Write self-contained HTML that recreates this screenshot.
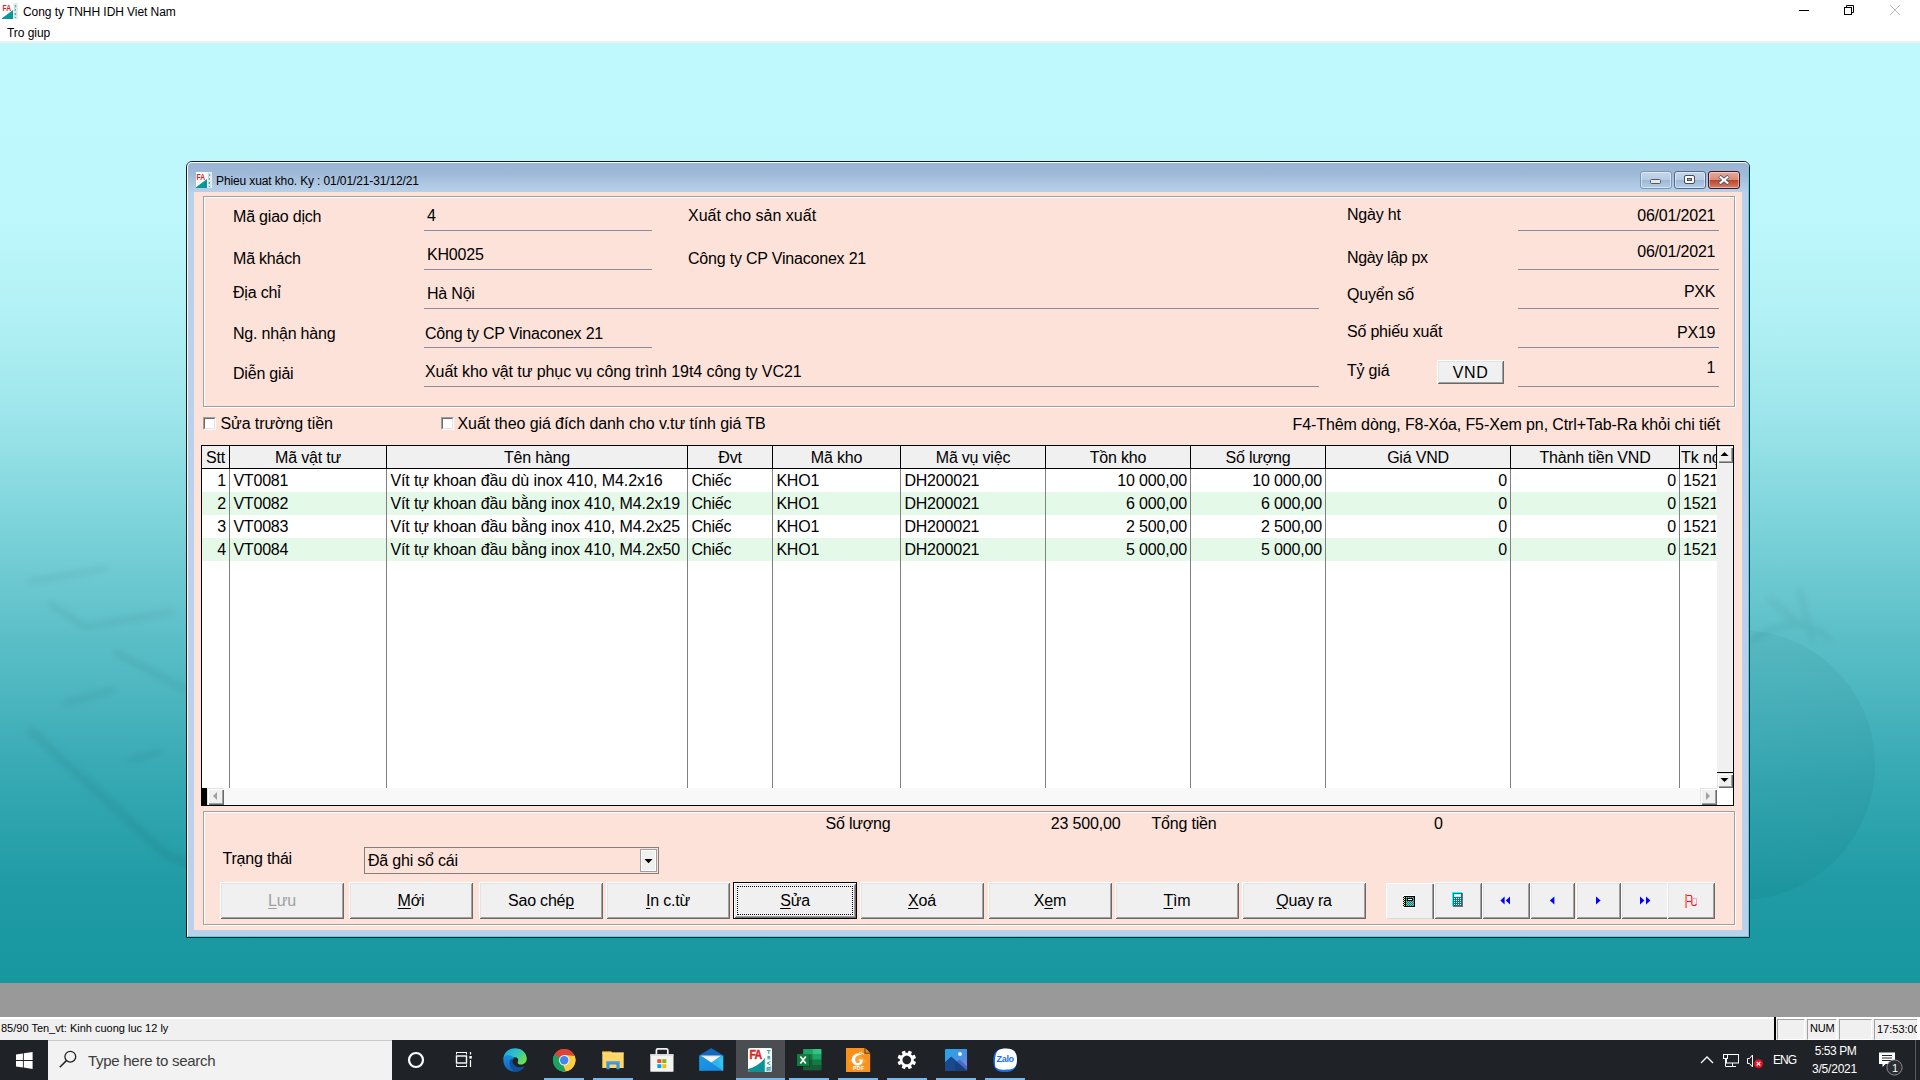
<!DOCTYPE html>
<html><head><meta charset="utf-8"><title>Phieu xuat kho</title>
<style>
html,body{margin:0;padding:0;}
body{width:1920px;height:1080px;overflow:hidden;position:relative;background:#fff;font-family:"Liberation Sans",sans-serif;}
.t{position:absolute;white-space:pre;font-family:"Liberation Sans",sans-serif;}
.r{position:absolute;}
svg{position:absolute;overflow:visible;}
u{text-decoration:underline;text-underline-offset:2px;text-decoration-thickness:1px;}
</style></head><body>

<div class="r" style="left:0px;top:0px;width:1920px;height:42px;background:#fff;"></div>
<div class="r" style="left:0px;top:41px;width:1920px;height:2px;background:#f0f0f0;"></div>
<svg style="left:2px;top:3px" width="16" height="16" viewBox="0 0 16 16"><rect width="16" height="16" fill="#fff"/><rect x="11.5" width="4.5" height="16" fill="#e4ecec"/><path d="M0 15.2L11 7V16H0Z" fill="#0c959b"/><path d="M12.6 2.2l1.6 1-1.6 1M12.6 6l1.4.8-1.4.8M14.2 10l-1.6 1 1.6 1M12.6 14l1.6 1" stroke="#2f8f8f" stroke-width=".8" fill="none"/><text x="0.5" y="8" font-family="Liberation Sans" font-weight="700" font-size="8.4" fill="#e02020" textLength="8.6" lengthAdjust="spacingAndGlyphs">FA</text></svg>
<div class="t" style="top:4px;font-size:12px;line-height:16px;color:#000;letter-spacing:-0.06px;left:23px;">Cong ty TNHH IDH Viet Nam</div>
<div class="t" style="top:25px;font-size:12px;line-height:16px;color:#000;letter-spacing:-0.05px;left:7px;">Tro giup</div>
<div class="r" style="left:1799px;top:10px;width:10px;height:1px;background:#000;"></div>
<svg style="left:1844px;top:5px" width="10" height="10" viewBox="0 0 10 10"><path d="M2.5 2.5V0.5H9.5V7.5H7.5" fill="none" stroke="#000" stroke-width="1"/><rect x="0.5" y="2.5" width="7" height="7" fill="none" stroke="#000" stroke-width="1"/></svg>
<svg style="left:1890px;top:5px" width="10" height="10" viewBox="0 0 10 10"><path d="M0 0L10 10M10 0L0 10" fill="none" stroke="#bcbcbc" stroke-width="1"/></svg>
<div class="r" style="left:0px;top:43px;width:1920px;height:940px;background:linear-gradient(to bottom,#c0f9fd 0%,#bef8fc 18%,#b0f0f4 30%,#9ce5ea 40%,#88dae0 47%,#5cbfc8 63%,#36a9b3 78%,#1f9ba5 90%,#17979f 100%);"></div>
<div class="r" style="left:1605px;top:630px;width:270px;height:270px;border-radius:50%;background:radial-gradient(circle at 40% 45%,rgba(0,60,70,0.03) 0%,rgba(0,60,70,0.06) 70%,rgba(0,50,60,0.09) 100%);"></div>
<svg style="left:0;top:42px" width="1920" height="941" viewBox="0 42 1920 941"><defs><filter id="bl" x="-20%" y="-20%" width="140%" height="140%"><feGaussianBlur stdDeviation="3"/></filter></defs><g filter="url(#bl)" stroke="rgba(0,45,55,0.06)" stroke-width="6" fill="none" stroke-linecap="round"><path d="M31 581L105 569"/><path d="M50 604L86 627L171 612"/><path d="M66 703L113 690"/><path d="M117 653L167 680L186 690"/><path d="M31 731L167 855L186 862" stroke-width="9"/><path d="M130 760L160 752"/><path d="M1752 640Q1800 610 1830 640M1770 600L1800 625M1800 590L1812 640" stroke-width="5"/></g></svg>
<div class="r" style="left:0px;top:983px;width:1920px;height:34px;background:#999999;"></div>
<div class="r" style="left:0px;top:1017px;width:1920px;height:23px;background:#f0f0f0;"></div>
<div class="r" style="left:0px;top:1017px;width:1920px;height:2px;background:#fff;"></div>
<div class="t" style="top:1021px;font-size:11px;line-height:15px;color:#000;letter-spacing:0px;left:1px;">85/90 Ten_vt: Kinh cuong luc 12 ly</div>
<div class="r" style="left:186px;top:161px;width:1562px;height:775px;border:1px solid #1a1a1a;border-radius:6px 6px 0 0;background:#b9d1ea;overflow:hidden;"><div class="r" style="left:0;top:0;width:1562px;height:31px;background:linear-gradient(to bottom,#98b4d3 0%,#9fbad8 40%,#b4cde7 85%,#b9d1ea 100%);"></div><div class="r" style="left:0;top:0;width:1562px;height:775px;border-top:1px solid #fff;border-left:1px solid #fff;border-radius:5px 5px 0 0;box-sizing:border-box;"></div><div class="r" style="left:1561px;top:8px;width:1px;height:767px;background:#35dcf5;"></div><div class="r" style="left:1px;top:774px;width:1561px;height:1px;background:#35dcf5;"></div></div>
<div class="r" style="left:194px;top:192px;width:1548px;height:738px;background:#fce2d9;"></div>
<svg style="left:196px;top:172px" width="16" height="16" viewBox="0 0 16 16"><rect width="16" height="16" fill="#fff"/><rect x="11.5" width="4.5" height="16" fill="#e4ecec"/><path d="M0 15.2L11 7V16H0Z" fill="#0c959b"/><path d="M12.6 2.2l1.6 1-1.6 1M12.6 6l1.4.8-1.4.8M14.2 10l-1.6 1 1.6 1M12.6 14l1.6 1" stroke="#2f8f8f" stroke-width=".8" fill="none"/><text x="0.5" y="8" font-family="Liberation Sans" font-weight="700" font-size="8.4" fill="#e02020" textLength="8.6" lengthAdjust="spacingAndGlyphs">FA</text></svg>
<div class="t" style="top:173px;font-size:12px;line-height:16px;color:#000;letter-spacing:-0.12px;left:216px;">Phieu xuat kho. Ky : 01/01/21-31/12/21</div>
<div class="r" style="left:1640px;top:171px;width:30px;height:16px;border:1px solid #7d95b3;border-radius:3px;background:linear-gradient(to bottom,#c3d6ec 0%,#b6cce5 48%,#9cb7d6 50%,#b3cde8 100%);box-shadow:inset 0 0 0 1px rgba(255,255,255,.5);"></div>
<div class="r" style="left:1650px;top:179px;width:9px;height:3px;border:1px solid #55585f;border-radius:1.5px;background:#e8e8e8;"></div>
<div class="r" style="left:1674px;top:171px;width:30px;height:16px;border:1px solid #56688a;border-radius:3px;background:linear-gradient(to bottom,#c3d6ec 0%,#b6cce5 48%,#9cb7d6 50%,#b3cde8 100%);box-shadow:inset 0 0 0 1px rgba(255,255,255,.5);"></div>
<div class="r" style="left:1685px;top:176px;width:5px;height:3px;border:2px solid #fff;border-radius:1px;outline:1px solid #474c60;background:#8faed2;box-shadow:inset 0 0 0 1px #474c60;"></div>
<div class="r" style="left:1708px;top:171px;width:30px;height:16px;border:1px solid #431422;border-radius:3px;background:linear-gradient(to bottom,#e9a99c 0%,#dc8a78 48%,#b8432a 50%,#d4806c 100%);box-shadow:inset 0 0 0 1px rgba(255,255,255,.45);"></div>
<svg style="left:1718px;top:175px" width="12" height="10" viewBox="0 0 12 10"><path d="M1.5 1.2L10.5 8.8M10.5 1.2L1.5 8.8" stroke="#4a5066" stroke-width="3.6" fill="none"/><path d="M1.8 1.5L10.2 8.5M10.2 1.5L1.8 8.5" stroke="#fff" stroke-width="2.2" fill="none"/></svg>
<div class="r" style="left:204px;top:197px;width:1530px;height:209px;border:1px solid #fff;"></div>
<div class="r" style="left:203px;top:196px;width:1530px;height:209px;border:1px solid #a0a0a0;"></div>
<div class="t" style="top:207px;font-size:16px;line-height:20px;color:#000;letter-spacing:-0.2px;left:233px;">Mã giao dịch</div>
<div class="t" style="top:249px;font-size:16px;line-height:20px;color:#000;letter-spacing:-0.2px;left:233px;">Mã khách</div>
<div class="t" style="top:283px;font-size:16px;line-height:20px;color:#000;letter-spacing:-0.2px;left:233px;">Địa chỉ</div>
<div class="t" style="top:324px;font-size:16px;line-height:20px;color:#000;letter-spacing:-0.2px;left:233px;">Ng. nhận hàng</div>
<div class="t" style="top:364px;font-size:16px;line-height:20px;color:#000;letter-spacing:-0.2px;left:233px;">Diễn giải</div>
<div class="t" style="top:206px;font-size:16px;line-height:20px;color:#000;letter-spacing:-0.2px;left:427px;">4</div>
<div class="t" style="top:245px;font-size:16px;line-height:20px;color:#000;letter-spacing:-0.2px;left:427px;">KH0025</div>
<div class="t" style="top:284px;font-size:16px;line-height:20px;color:#000;letter-spacing:-0.2px;left:427px;">Hà Nội</div>
<div class="t" style="top:324px;font-size:16px;line-height:20px;color:#000;letter-spacing:-0.2px;left:425px;">Công ty CP Vinaconex 21</div>
<div class="t" style="top:362px;font-size:16px;line-height:20px;color:#000;letter-spacing:-0.08px;left:425px;">Xuất kho vật tư phục vụ công trình 19t4 công ty VC21</div>
<div class="t" style="top:206px;font-size:16px;line-height:20px;color:#000;letter-spacing:0px;left:688px;">Xuất cho sản xuất</div>
<div class="t" style="top:249px;font-size:16px;line-height:20px;color:#000;letter-spacing:-0.2px;left:688px;">Công ty CP Vinaconex 21</div>
<div class="r" style="left:424px;top:230px;width:228px;height:1px;background:#8a8aa3;"></div>
<div class="r" style="left:424px;top:269px;width:228px;height:1px;background:#8a8aa3;"></div>
<div class="r" style="left:424px;top:308px;width:895px;height:1px;background:#8a8aa3;"></div>
<div class="r" style="left:424px;top:347px;width:228px;height:1px;background:#8a8aa3;"></div>
<div class="r" style="left:424px;top:386px;width:895px;height:1px;background:#8a8aa3;"></div>
<div class="t" style="top:205px;font-size:16px;line-height:20px;color:#000;letter-spacing:-0.2px;left:1347px;">Ngày ht</div>
<div class="t" style="top:248px;font-size:16px;line-height:20px;color:#000;letter-spacing:-0.35px;left:1347px;">Ngày lập px</div>
<div class="t" style="top:285px;font-size:16px;line-height:20px;color:#000;letter-spacing:-0.2px;left:1347px;">Quyển số</div>
<div class="t" style="top:322px;font-size:16px;line-height:20px;color:#000;letter-spacing:-0.2px;left:1347px;">Số phiếu xuất</div>
<div class="t" style="top:361px;font-size:16px;line-height:20px;color:#000;letter-spacing:-0.2px;left:1347px;">Tỷ giá</div>
<div class="t" style="top:206px;font-size:16px;line-height:20px;color:#000;letter-spacing:-0.2px;right:204.70000000000005px;text-align:right;">06/01/2021</div>
<div class="t" style="top:242px;font-size:16px;line-height:20px;color:#000;letter-spacing:-0.2px;right:204.70000000000005px;text-align:right;">06/01/2021</div>
<div class="t" style="top:282px;font-size:16px;line-height:20px;color:#000;letter-spacing:-0.2px;right:204.70000000000005px;text-align:right;">PXK</div>
<div class="t" style="top:323px;font-size:16px;line-height:20px;color:#000;letter-spacing:-0.2px;right:204.70000000000005px;text-align:right;">PX19</div>
<div class="t" style="top:358px;font-size:16px;line-height:20px;color:#000;letter-spacing:-0.2px;right:204.70000000000005px;text-align:right;">1</div>
<div class="r" style="left:1518px;top:230px;width:201px;height:1px;background:#8a8aa3;"></div>
<div class="r" style="left:1518px;top:269px;width:201px;height:1px;background:#8a8aa3;"></div>
<div class="r" style="left:1518px;top:308px;width:201px;height:1px;background:#8a8aa3;"></div>
<div class="r" style="left:1518px;top:347px;width:201px;height:1px;background:#8a8aa3;"></div>
<div class="r" style="left:1518px;top:386px;width:201px;height:1px;background:#8a8aa3;"></div>
<div class="r" style="left:1437px;top:360px;width:67px;height:24px;background:#f0f0f0;box-shadow:inset 1px 1px 0 #fff,inset -1px -1px 0 #696969,inset 2px 2px 0 #e3e3e3,inset -2px -2px 0 #a0a0a0;"></div>
<div class="t" style="top:363px;font-size:16px;line-height:20px;color:#000;letter-spacing:0.6px;left:1170.5px;width:600px;text-align:center;">VND</div>
<div class="r" style="left:203px;top:417px;width:11px;height:11px;border:1px solid #a0a0a0;border-right-color:#fff;border-bottom-color:#fff;"><div class="r" style="left:0;top:0;width:9px;height:9px;background:#fff;border:1px solid #696969;border-right-color:#e3e3e3;border-bottom-color:#e3e3e3;"></div></div>
<div class="r" style="left:441px;top:417px;width:11px;height:11px;border:1px solid #a0a0a0;border-right-color:#fff;border-bottom-color:#fff;"><div class="r" style="left:0;top:0;width:9px;height:9px;background:#fff;border:1px solid #696969;border-right-color:#e3e3e3;border-bottom-color:#e3e3e3;"></div></div>
<div class="t" style="top:414px;font-size:16px;line-height:20px;color:#000;letter-spacing:-0.1px;left:220.5px;">Sửa trường tiền</div>
<div class="t" style="top:414px;font-size:16px;line-height:20px;color:#000;letter-spacing:-0.08px;left:457.5px;">Xuất theo giá đích danh cho v.tư tính giá TB</div>
<div class="t" style="top:415px;font-size:16px;line-height:20px;color:#000;letter-spacing:-0.105px;right:200px;text-align:right;">F4-Thêm dòng, F8-Xóa, F5-Xem pn, Ctrl+Tab-Ra khỏi chi tiết</div>
<div class="r" style="left:201px;top:445px;width:1533px;height:361px;background:#000;"></div>
<div class="r" style="left:202px;top:446px;width:1531px;height:359px;background:#fff;"></div>
<div class="r" style="left:202px;top:446px;width:1515px;height:22px;background:#f0f0f0;"></div>
<div class="r" style="left:202px;top:468px;width:1515px;height:1px;background:#000;"></div>
<div class="r" style="left:202px;top:492px;width:1515px;height:23px;background:#e5f9e9;"></div>
<div class="r" style="left:202px;top:538px;width:1515px;height:23px;background:#e5f9e9;"></div>
<div class="r" style="left:229px;top:446px;width:1px;height:22px;background:#000;"></div>
<div class="r" style="left:229px;top:469px;width:1px;height:319px;background:#808080;"></div>
<div class="r" style="left:386px;top:446px;width:1px;height:22px;background:#000;"></div>
<div class="r" style="left:386px;top:469px;width:1px;height:319px;background:#808080;"></div>
<div class="r" style="left:687px;top:446px;width:1px;height:22px;background:#000;"></div>
<div class="r" style="left:687px;top:469px;width:1px;height:319px;background:#808080;"></div>
<div class="r" style="left:772px;top:446px;width:1px;height:22px;background:#000;"></div>
<div class="r" style="left:772px;top:469px;width:1px;height:319px;background:#808080;"></div>
<div class="r" style="left:900px;top:446px;width:1px;height:22px;background:#000;"></div>
<div class="r" style="left:900px;top:469px;width:1px;height:319px;background:#808080;"></div>
<div class="r" style="left:1045px;top:446px;width:1px;height:22px;background:#000;"></div>
<div class="r" style="left:1045px;top:469px;width:1px;height:319px;background:#808080;"></div>
<div class="r" style="left:1190px;top:446px;width:1px;height:22px;background:#000;"></div>
<div class="r" style="left:1190px;top:469px;width:1px;height:319px;background:#808080;"></div>
<div class="r" style="left:1325px;top:446px;width:1px;height:22px;background:#000;"></div>
<div class="r" style="left:1325px;top:469px;width:1px;height:319px;background:#808080;"></div>
<div class="r" style="left:1510px;top:446px;width:1px;height:22px;background:#000;"></div>
<div class="r" style="left:1510px;top:469px;width:1px;height:319px;background:#808080;"></div>
<div class="r" style="left:1679px;top:446px;width:1px;height:22px;background:#000;"></div>
<div class="r" style="left:1679px;top:469px;width:1px;height:319px;background:#808080;"></div>
<div class="r" style="left:1716px;top:446px;width:1px;height:23px;background:#000;"></div>
<div class="t" style="top:448px;font-size:16px;line-height:20px;color:#000;letter-spacing:-0.2px;left:-84.5px;width:600px;text-align:center;">Stt</div>
<div class="t" style="top:448px;font-size:16px;line-height:20px;color:#000;letter-spacing:-0.2px;left:8.0px;width:600px;text-align:center;">Mã vật tư</div>
<div class="t" style="top:448px;font-size:16px;line-height:20px;color:#000;letter-spacing:-0.2px;left:237.0px;width:600px;text-align:center;">Tên hàng</div>
<div class="t" style="top:448px;font-size:16px;line-height:20px;color:#000;letter-spacing:-0.2px;left:430.0px;width:600px;text-align:center;">Đvt</div>
<div class="t" style="top:448px;font-size:16px;line-height:20px;color:#000;letter-spacing:-0.2px;left:536.5px;width:600px;text-align:center;">Mã kho</div>
<div class="t" style="top:448px;font-size:16px;line-height:20px;color:#000;letter-spacing:-0.2px;left:673.0px;width:600px;text-align:center;">Mã vụ việc</div>
<div class="t" style="top:448px;font-size:16px;line-height:20px;color:#000;letter-spacing:-0.2px;left:818.0px;width:600px;text-align:center;">Tồn kho</div>
<div class="t" style="top:448px;font-size:16px;line-height:20px;color:#000;letter-spacing:-0.2px;left:958.0px;width:600px;text-align:center;">Số lượng</div>
<div class="t" style="top:448px;font-size:16px;line-height:20px;color:#000;letter-spacing:-0.2px;left:1118.0px;width:600px;text-align:center;">Giá VND</div>
<div class="t" style="top:448px;font-size:16px;line-height:20px;color:#000;letter-spacing:-0.2px;left:1295.0px;width:600px;text-align:center;">Thành tiền VND</div>
<div class="r" style="left:1680px;top:446px;width:36px;height:22px;overflow:hidden;"><div class="t" style="left:1px;top:2px;font-size:16px;line-height:20px;letter-spacing:-0.08px;">Tk nợ</div></div>
<div class="t" style="top:471px;font-size:16px;line-height:20px;color:#000;letter-spacing:-0.15px;right:1694px;text-align:right;">1</div>
<div class="t" style="top:471px;font-size:16px;line-height:20px;color:#000;letter-spacing:-0.2px;left:233.4px;">VT0081</div>
<div class="t" style="top:471px;font-size:16px;line-height:20px;color:#000;letter-spacing:-0.1px;left:390.4px;">Vít tự khoan đầu dù inox 410, M4.2x16</div>
<div class="t" style="top:471px;font-size:16px;line-height:20px;color:#000;letter-spacing:-0.2px;left:691.4px;">Chiếc</div>
<div class="t" style="top:471px;font-size:16px;line-height:20px;color:#000;letter-spacing:-0.2px;left:776.4px;">KHO1</div>
<div class="t" style="top:471px;font-size:16px;line-height:20px;color:#000;letter-spacing:-0.2px;left:904.4px;">DH200021</div>
<div class="t" style="top:471px;font-size:16px;line-height:20px;color:#000;letter-spacing:-0.15px;right:733px;text-align:right;">10 000,00</div>
<div class="t" style="top:471px;font-size:16px;line-height:20px;color:#000;letter-spacing:-0.15px;right:598px;text-align:right;">10 000,00</div>
<div class="t" style="top:471px;font-size:16px;line-height:20px;color:#000;letter-spacing:-0.15px;right:413px;text-align:right;">0</div>
<div class="t" style="top:471px;font-size:16px;line-height:20px;color:#000;letter-spacing:-0.15px;right:244px;text-align:right;">0</div>
<div class="r" style="left:1680px;top:469px;width:36px;height:23px;overflow:hidden;"><div class="t" style="left:3px;top:2px;font-size:16px;line-height:20px;letter-spacing:-0.1px;">1521</div></div>
<div class="t" style="top:494px;font-size:16px;line-height:20px;color:#000;letter-spacing:-0.15px;right:1694px;text-align:right;">2</div>
<div class="t" style="top:494px;font-size:16px;line-height:20px;color:#000;letter-spacing:-0.2px;left:233.4px;">VT0082</div>
<div class="t" style="top:494px;font-size:16px;line-height:20px;color:#000;letter-spacing:-0.1px;left:390.4px;">Vít tự khoan đầu bằng inox 410, M4.2x19</div>
<div class="t" style="top:494px;font-size:16px;line-height:20px;color:#000;letter-spacing:-0.2px;left:691.4px;">Chiếc</div>
<div class="t" style="top:494px;font-size:16px;line-height:20px;color:#000;letter-spacing:-0.2px;left:776.4px;">KHO1</div>
<div class="t" style="top:494px;font-size:16px;line-height:20px;color:#000;letter-spacing:-0.2px;left:904.4px;">DH200021</div>
<div class="t" style="top:494px;font-size:16px;line-height:20px;color:#000;letter-spacing:-0.15px;right:733px;text-align:right;">6 000,00</div>
<div class="t" style="top:494px;font-size:16px;line-height:20px;color:#000;letter-spacing:-0.15px;right:598px;text-align:right;">6 000,00</div>
<div class="t" style="top:494px;font-size:16px;line-height:20px;color:#000;letter-spacing:-0.15px;right:413px;text-align:right;">0</div>
<div class="t" style="top:494px;font-size:16px;line-height:20px;color:#000;letter-spacing:-0.15px;right:244px;text-align:right;">0</div>
<div class="r" style="left:1680px;top:492px;width:36px;height:23px;overflow:hidden;"><div class="t" style="left:3px;top:2px;font-size:16px;line-height:20px;letter-spacing:-0.1px;">1521</div></div>
<div class="t" style="top:517px;font-size:16px;line-height:20px;color:#000;letter-spacing:-0.15px;right:1694px;text-align:right;">3</div>
<div class="t" style="top:517px;font-size:16px;line-height:20px;color:#000;letter-spacing:-0.2px;left:233.4px;">VT0083</div>
<div class="t" style="top:517px;font-size:16px;line-height:20px;color:#000;letter-spacing:-0.1px;left:390.4px;">Vít tự khoan đầu bằng inox 410, M4.2x25</div>
<div class="t" style="top:517px;font-size:16px;line-height:20px;color:#000;letter-spacing:-0.2px;left:691.4px;">Chiếc</div>
<div class="t" style="top:517px;font-size:16px;line-height:20px;color:#000;letter-spacing:-0.2px;left:776.4px;">KHO1</div>
<div class="t" style="top:517px;font-size:16px;line-height:20px;color:#000;letter-spacing:-0.2px;left:904.4px;">DH200021</div>
<div class="t" style="top:517px;font-size:16px;line-height:20px;color:#000;letter-spacing:-0.15px;right:733px;text-align:right;">2 500,00</div>
<div class="t" style="top:517px;font-size:16px;line-height:20px;color:#000;letter-spacing:-0.15px;right:598px;text-align:right;">2 500,00</div>
<div class="t" style="top:517px;font-size:16px;line-height:20px;color:#000;letter-spacing:-0.15px;right:413px;text-align:right;">0</div>
<div class="t" style="top:517px;font-size:16px;line-height:20px;color:#000;letter-spacing:-0.15px;right:244px;text-align:right;">0</div>
<div class="r" style="left:1680px;top:515px;width:36px;height:23px;overflow:hidden;"><div class="t" style="left:3px;top:2px;font-size:16px;line-height:20px;letter-spacing:-0.1px;">1521</div></div>
<div class="t" style="top:540px;font-size:16px;line-height:20px;color:#000;letter-spacing:-0.15px;right:1694px;text-align:right;">4</div>
<div class="t" style="top:540px;font-size:16px;line-height:20px;color:#000;letter-spacing:-0.2px;left:233.4px;">VT0084</div>
<div class="t" style="top:540px;font-size:16px;line-height:20px;color:#000;letter-spacing:-0.1px;left:390.4px;">Vít tự khoan đầu bằng inox 410, M4.2x50</div>
<div class="t" style="top:540px;font-size:16px;line-height:20px;color:#000;letter-spacing:-0.2px;left:691.4px;">Chiếc</div>
<div class="t" style="top:540px;font-size:16px;line-height:20px;color:#000;letter-spacing:-0.2px;left:776.4px;">KHO1</div>
<div class="t" style="top:540px;font-size:16px;line-height:20px;color:#000;letter-spacing:-0.2px;left:904.4px;">DH200021</div>
<div class="t" style="top:540px;font-size:16px;line-height:20px;color:#000;letter-spacing:-0.15px;right:733px;text-align:right;">5 000,00</div>
<div class="t" style="top:540px;font-size:16px;line-height:20px;color:#000;letter-spacing:-0.15px;right:598px;text-align:right;">5 000,00</div>
<div class="t" style="top:540px;font-size:16px;line-height:20px;color:#000;letter-spacing:-0.15px;right:413px;text-align:right;">0</div>
<div class="t" style="top:540px;font-size:16px;line-height:20px;color:#000;letter-spacing:-0.15px;right:244px;text-align:right;">0</div>
<div class="r" style="left:1680px;top:538px;width:36px;height:23px;overflow:hidden;"><div class="t" style="left:3px;top:2px;font-size:16px;line-height:20px;letter-spacing:-0.1px;">1521</div></div>
<div class="r" style="left:1717px;top:446px;width:16px;height:342px;background:#f0f0f0;"></div>
<div class="r" style="left:1717px;top:446px;width:16px;height:17px;background:#f0f0f0;box-shadow:inset 1px 1px 0 #e3e3e3,inset 2px 2px 0 #fff,inset -1px -1px 0 #696969,inset -2px -2px 0 #a0a0a0;"></div>
<svg style="left:0;top:0" width="1" height="1"><path d="M1720.5 456.0L1724.5 452.0L1728.5 456.0Z" fill="#000"/></svg>
<div class="r" style="left:1717px;top:772px;width:16px;height:1px;background:#000;"></div>
<div class="r" style="left:1717px;top:773px;width:16px;height:15px;background:#f0f0f0;box-shadow:inset 1px 1px 0 #e3e3e3,inset 2px 2px 0 #fff,inset -1px -1px 0 #696969,inset -2px -2px 0 #a0a0a0;"></div>
<svg style="left:0;top:0" width="1" height="1"><path d="M1720.5 778.0L1724.5 782.0L1728.5 778.0Z" fill="#000"/></svg>
<div class="r" style="left:202px;top:788px;width:1515px;height:17px;background:#f8f8f8;"></div>
<div class="r" style="left:202px;top:788px;width:5px;height:17px;background:#000;"></div>
<div class="r" style="left:207px;top:788px;width:17px;height:17px;background:#f0f0f0;box-shadow:inset 1px 1px 0 #e3e3e3,inset 2px 2px 0 #fff,inset -1px -1px 0 #696969,inset -2px -2px 0 #a0a0a0;"></div>
<svg style="left:0;top:0" width="1" height="1"><path d="M217.0 792.0L213.0 796.0L217.0 800.0Z" fill="#a0a0a0"/></svg>
<div class="r" style="left:1700px;top:788px;width:17px;height:17px;background:#f0f0f0;box-shadow:inset 1px 1px 0 #e3e3e3,inset 2px 2px 0 #fff,inset -1px -1px 0 #696969,inset -2px -2px 0 #a0a0a0;"></div>
<svg style="left:0;top:0" width="1" height="1"><path d="M1706.0 792.0L1710.0 796.0L1706.0 800.0Z" fill="#a0a0a0"/></svg>
<div class="r" style="left:1717px;top:788px;width:16px;height:17px;background:#fff;"></div>
<div class="r" style="left:204px;top:812px;width:1530px;height:112px;border:1px solid #fff;"></div>
<div class="r" style="left:203px;top:811px;width:1530px;height:112px;border:1px solid #a0a0a0;"></div>
<div class="t" style="top:814px;font-size:16px;line-height:20px;color:#000;letter-spacing:-0.2px;left:825.5px;">Số lượng</div>
<div class="t" style="top:814px;font-size:16px;line-height:20px;color:#000;letter-spacing:-0.15px;right:799.5px;text-align:right;">23 500,00</div>
<div class="t" style="top:814px;font-size:16px;line-height:20px;color:#000;letter-spacing:-0.2px;left:1151.5px;">Tổng tiền</div>
<div class="t" style="top:814px;font-size:16px;line-height:20px;color:#000;letter-spacing:-0.2px;left:1434px;">0</div>
<div class="t" style="top:849px;font-size:16px;line-height:20px;color:#000;letter-spacing:-0.2px;left:222.5px;">Trạng thái</div>
<div class="r" style="left:364px;top:847px;width:293px;height:25px;border:1px solid #808080;"></div>
<div class="t" style="top:851px;font-size:16px;line-height:20px;color:#000;letter-spacing:-0.2px;left:368px;">Đã ghi sổ cái</div>
<div class="r" style="left:640px;top:849px;width:15px;height:21px;border:1px solid #a0a0a0;background:#f0f0f0;box-shadow:inset 0 0 0 1px #fff;"></div>
<svg style="left:0;top:0" width="1" height="1"><path d="M644.5 859L652.5 859L648.5 863.2Z" fill="#000"/></svg>
<div class="r" style="left:220px;top:882px;width:124px;height:37px;background:#f0f0f0;box-shadow:inset 1px 1px 0 #fff,inset -1px -1px 0 #696969,inset 2px 2px 0 #e3e3e3,inset -2px -2px 0 #a0a0a0;"></div>
<div class="t" style="top:891px;font-size:16px;line-height:20px;color:#a0a0a0;letter-spacing:-0.2px;left:-18.0px;width:600px;text-align:center;"><u>L</u>ưu</div>
<div class="r" style="left:349px;top:882px;width:124px;height:37px;background:#f0f0f0;box-shadow:inset 1px 1px 0 #fff,inset -1px -1px 0 #696969,inset 2px 2px 0 #e3e3e3,inset -2px -2px 0 #a0a0a0;"></div>
<div class="t" style="top:891px;font-size:16px;line-height:20px;color:#000;letter-spacing:-0.2px;left:111.0px;width:600px;text-align:center;"><u>M</u>ới</div>
<div class="r" style="left:479px;top:882px;width:124px;height:37px;background:#f0f0f0;box-shadow:inset 1px 1px 0 #fff,inset -1px -1px 0 #696969,inset 2px 2px 0 #e3e3e3,inset -2px -2px 0 #a0a0a0;"></div>
<div class="t" style="top:891px;font-size:16px;line-height:20px;color:#000;letter-spacing:-0.2px;left:241.0px;width:600px;text-align:center;">Sao ché<u>p</u></div>
<div class="r" style="left:606px;top:882px;width:124px;height:37px;background:#f0f0f0;box-shadow:inset 1px 1px 0 #fff,inset -1px -1px 0 #696969,inset 2px 2px 0 #e3e3e3,inset -2px -2px 0 #a0a0a0;"></div>
<div class="t" style="top:891px;font-size:16px;line-height:20px;color:#000;letter-spacing:-0.2px;left:368.0px;width:600px;text-align:center;"><u>I</u>n c.từ</div>
<div class="r" style="left:733px;top:882px;width:122px;height:35px;border:1px solid #000;background:#f0f0f0;box-shadow:inset 1px 1px 0 #fff,inset -1px -1px 0 #696969,inset 2px 2px 0 #e3e3e3,inset -2px -2px 0 #a0a0a0;"></div>
<div class="r" style="left:737px;top:886px;width:114px;height:27px;border:1px dotted #000;"></div>
<div class="t" style="top:891px;font-size:16px;line-height:20px;color:#000;letter-spacing:-0.2px;left:495.0px;width:600px;text-align:center;"><u>S</u>ửa</div>
<div class="r" style="left:860px;top:882px;width:124px;height:37px;background:#f0f0f0;box-shadow:inset 1px 1px 0 #fff,inset -1px -1px 0 #696969,inset 2px 2px 0 #e3e3e3,inset -2px -2px 0 #a0a0a0;"></div>
<div class="t" style="top:891px;font-size:16px;line-height:20px;color:#000;letter-spacing:-0.2px;left:622.0px;width:600px;text-align:center;"><u>X</u>oá</div>
<div class="r" style="left:988px;top:882px;width:124px;height:37px;background:#f0f0f0;box-shadow:inset 1px 1px 0 #fff,inset -1px -1px 0 #696969,inset 2px 2px 0 #e3e3e3,inset -2px -2px 0 #a0a0a0;"></div>
<div class="t" style="top:891px;font-size:16px;line-height:20px;color:#000;letter-spacing:-0.2px;left:750.0px;width:600px;text-align:center;">X<u>e</u>m</div>
<div class="r" style="left:1115px;top:882px;width:124px;height:37px;background:#f0f0f0;box-shadow:inset 1px 1px 0 #fff,inset -1px -1px 0 #696969,inset 2px 2px 0 #e3e3e3,inset -2px -2px 0 #a0a0a0;"></div>
<div class="t" style="top:891px;font-size:16px;line-height:20px;color:#000;letter-spacing:-0.2px;left:877.0px;width:600px;text-align:center;"><u>T</u>ìm</div>
<div class="r" style="left:1242px;top:882px;width:124px;height:37px;background:#f0f0f0;box-shadow:inset 1px 1px 0 #fff,inset -1px -1px 0 #696969,inset 2px 2px 0 #e3e3e3,inset -2px -2px 0 #a0a0a0;"></div>
<div class="t" style="top:891px;font-size:16px;line-height:20px;color:#000;letter-spacing:-0.2px;left:1004.0px;width:600px;text-align:center;"><u>Q</u>uay ra</div>
<div class="r" style="left:1386px;top:883px;width:48px;height:36px;background:#f0f0f0;box-shadow:inset 1px 1px 0 #fff,inset -1px 0 0 #696969,inset -2px 0 0 #a0a0a0,inset 0 -1px 0 #d8d8d8;"></div>
<div class="r" style="left:1434px;top:882px;width:48px;height:37px;background:#f0f0f0;box-shadow:inset 1px 1px 0 #fff,inset -1px -1px 0 #696969,inset 2px 2px 0 #e3e3e3,inset -2px -2px 0 #a0a0a0;"></div>
<div class="r" style="left:1482px;top:882px;width:48px;height:37px;background:#f0f0f0;box-shadow:inset 1px 1px 0 #fff,inset -1px -1px 0 #696969,inset 2px 2px 0 #e3e3e3,inset -2px -2px 0 #a0a0a0;"></div>
<div class="r" style="left:1530px;top:882px;width:45px;height:37px;background:#f0f0f0;box-shadow:inset 1px 1px 0 #fff,inset -1px -1px 0 #696969,inset 2px 2px 0 #e3e3e3,inset -2px -2px 0 #a0a0a0;"></div>
<div class="r" style="left:1576px;top:882px;width:45px;height:37px;background:#f0f0f0;box-shadow:inset 1px 1px 0 #fff,inset -1px -1px 0 #696969,inset 2px 2px 0 #e3e3e3,inset -2px -2px 0 #a0a0a0;"></div>
<div class="r" style="left:1621px;top:882px;width:48px;height:37px;background:#f0f0f0;box-shadow:inset 1px 1px 0 #fff,inset -1px -1px 0 #696969,inset 2px 2px 0 #e3e3e3,inset -2px -2px 0 #a0a0a0;"></div>
<div class="r" style="left:1667px;top:882px;width:48px;height:37px;background:#f0f0f0;box-shadow:inset 1px 1px 0 #fff,inset -1px -1px 0 #696969,inset 2px 2px 0 #e3e3e3,inset -2px -2px 0 #a0a0a0;"></div>
<svg style="left:0;top:0" width="1" height="1" shape-rendering="crispEdges"><rect x="1403" y="895" width="12" height="13" fill="#fff"/><rect x="1404" y="896" width="11" height="11" fill="#000"/><rect x="1406" y="897" width="8" height="9" fill="#7fc3c3"/><rect x="1407" y="897" width="1" height="1" fill="#008080"/><rect x="1409" y="897" width="1" height="1" fill="#008080"/><rect x="1411" y="897" width="1" height="1" fill="#008080"/><rect x="1413" y="897" width="1" height="1" fill="#008080"/><rect x="1406" y="898" width="1" height="1" fill="#008080"/><rect x="1408" y="898" width="1" height="1" fill="#008080"/><rect x="1410" y="898" width="1" height="1" fill="#008080"/><rect x="1412" y="898" width="1" height="1" fill="#008080"/><rect x="1407" y="899" width="1" height="1" fill="#008080"/><rect x="1409" y="899" width="1" height="1" fill="#008080"/><rect x="1411" y="899" width="1" height="1" fill="#008080"/><rect x="1413" y="899" width="1" height="1" fill="#008080"/><rect x="1406" y="900" width="1" height="1" fill="#008080"/><rect x="1408" y="900" width="1" height="1" fill="#008080"/><rect x="1410" y="900" width="1" height="1" fill="#008080"/><rect x="1412" y="900" width="1" height="1" fill="#008080"/><rect x="1407" y="901" width="1" height="1" fill="#008080"/><rect x="1409" y="901" width="1" height="1" fill="#008080"/><rect x="1411" y="901" width="1" height="1" fill="#008080"/><rect x="1413" y="901" width="1" height="1" fill="#008080"/><rect x="1406" y="902" width="1" height="1" fill="#008080"/><rect x="1408" y="902" width="1" height="1" fill="#008080"/><rect x="1410" y="902" width="1" height="1" fill="#008080"/><rect x="1412" y="902" width="1" height="1" fill="#008080"/><rect x="1407" y="903" width="1" height="1" fill="#008080"/><rect x="1409" y="903" width="1" height="1" fill="#008080"/><rect x="1411" y="903" width="1" height="1" fill="#008080"/><rect x="1413" y="903" width="1" height="1" fill="#008080"/><rect x="1406" y="904" width="1" height="1" fill="#008080"/><rect x="1408" y="904" width="1" height="1" fill="#008080"/><rect x="1410" y="904" width="1" height="1" fill="#008080"/><rect x="1412" y="904" width="1" height="1" fill="#008080"/><rect x="1407" y="905" width="1" height="1" fill="#008080"/><rect x="1409" y="905" width="1" height="1" fill="#008080"/><rect x="1411" y="905" width="1" height="1" fill="#008080"/><rect x="1413" y="905" width="1" height="1" fill="#008080"/><rect x="1407" y="898" width="6" height="3" fill="#000"/><rect x="1408" y="899" width="4" height="1" fill="#fff"/><rect x="1404" y="897" width="1" height="1" fill="#ffff00"/><rect x="1404" y="899" width="1" height="1" fill="#ffff00"/><rect x="1404" y="901" width="1" height="1" fill="#ffff00"/><rect x="1404" y="903" width="1" height="1" fill="#ffff00"/><rect x="1404" y="905" width="1" height="1" fill="#ffff00"/><rect x="1403" y="897" width="1" height="1" fill="#000"/><rect x="1403" y="899" width="1" height="1" fill="#000"/><rect x="1403" y="901" width="1" height="1" fill="#000"/><rect x="1403" y="903" width="1" height="1" fill="#000"/><rect x="1403" y="905" width="1" height="1" fill="#000"/><rect x="1403" y="896" width="1" height="1" fill="#f0f0f0"/><rect x="1403" y="898" width="1" height="1" fill="#f0f0f0"/><rect x="1403" y="900" width="1" height="1" fill="#f0f0f0"/><rect x="1403" y="902" width="1" height="1" fill="#f0f0f0"/><rect x="1403" y="904" width="1" height="1" fill="#f0f0f0"/><rect x="1403" y="906" width="1" height="1" fill="#f0f0f0"/><rect x="1453" y="893" width="10" height="14" fill="#7b6a6a"/><rect x="1452" y="892" width="10" height="14" fill="#00ffff"/><rect x="1453" y="893" width="9" height="13" fill="#008080"/><rect x="1454" y="894" width="7" height="3" fill="#e8d8d8"/><rect x="1455" y="895" width="5" height="1" fill="#fff"/><rect x="1454" y="898" width="1" height="1" fill="#fff"/><rect x="1454" y="900" width="1" height="1" fill="#fff"/><rect x="1454" y="902" width="1" height="1" fill="#fff"/><rect x="1454" y="904" width="1" height="1" fill="#fff"/><rect x="1456" y="898" width="1" height="1" fill="#fff"/><rect x="1456" y="900" width="1" height="1" fill="#fff"/><rect x="1456" y="902" width="1" height="1" fill="#fff"/><rect x="1456" y="904" width="1" height="1" fill="#fff"/><rect x="1458" y="898" width="1" height="1" fill="#fff"/><rect x="1458" y="900" width="1" height="1" fill="#fff"/><rect x="1458" y="902" width="1" height="1" fill="#fff"/><rect x="1458" y="904" width="1" height="1" fill="#fff"/><rect x="1460" y="898" width="1" height="1" fill="#fff"/><rect x="1460" y="900" width="1" height="1" fill="#fff"/><rect x="1460" y="902" width="1" height="1" fill="#fff"/><rect x="1460" y="904" width="1" height="1" fill="#fff"/></svg>
<svg style="left:0;top:0" width="1" height="1"><path d="M1500.4 900.5L1504.6 896.5V904.5Z" fill="#0000ff"/><path d="M1505.8 900.5L1510 896.5V904.5Z" fill="#0000ff"/><path d="M1549.8 900.5L1554.4 896.5V904.5Z" fill="#0000ff"/><path d="M1600.6 900.5L1596 896.5V904.5Z" fill="#0000ff"/><path d="M1644.4 900.5L1640 896.5V904.5Z" fill="#0000ff"/><path d="M1650.4 900.5L1646 896.5V904.5Z" fill="#0000ff"/><path d="M1685.5 894V908" stroke="#ff9a3c" stroke-width="1"/><path d="M1686.5 894V908" stroke="#ff6fa0" stroke-width="1"/><path d="M1687 895.5H1690.5Q1691.8 895.5 1691.8 897V904Q1691.8 905.5 1693.4 905.5H1694.5Q1696 905.5 1696.4 904" fill="none" stroke="#ff1010" stroke-width="1.1"/><path d="M1687 901.5H1691" stroke="#ff1010" stroke-width="1.1"/><path d="M1692.5 898.5H1696.5V904" fill="none" stroke="#ff9ac0" stroke-width="1"/></svg>
<div class="r" style="left:1774px;top:1017px;width:2px;height:23px;background:#000;"></div>
<div class="r" style="left:1777px;top:1019px;width:26px;height:19px;border-top:1px solid #a0a0a0;border-left:1px solid #a0a0a0;border-right:1px solid #fff;border-bottom:1px solid #fff;"></div>
<div class="r" style="left:1807px;top:1019px;width:28px;height:19px;border-top:1px solid #a0a0a0;border-left:1px solid #a0a0a0;border-right:1px solid #fff;border-bottom:1px solid #fff;"></div>
<div class="r" style="left:1839px;top:1019px;width:31px;height:19px;border-top:1px solid #a0a0a0;border-left:1px solid #a0a0a0;border-right:1px solid #fff;border-bottom:1px solid #fff;"></div>
<div class="r" style="left:1874px;top:1019px;width:43px;height:19px;border-top:1px solid #a0a0a0;border-left:1px solid #a0a0a0;border-right:1px solid #fff;border-bottom:1px solid #fff;"></div>
<div class="t" style="top:1021px;font-size:11px;line-height:15px;color:#000;letter-spacing:-0.2px;left:1810px;">NUM</div>
<div class="r" style="left:1875px;top:1020px;width:42px;height:18px;overflow:hidden;"><div class="t" style="left:2px;top:2px;font-size:11px;line-height:15px;">17:53:00</div></div>
<div class="r" style="left:1917px;top:1017px;width:3px;height:23px;background:#fff;"></div>
<div class="r" style="left:0px;top:1040px;width:1920px;height:40px;background:#1f2327;"></div>
<svg style="left:16px;top:1052px" width="17" height="17" viewBox="0 0 17 17"><path d="M0 2.4L6.9 1.4V8H0ZM7.8 1.3L16.6 0V8H7.8ZM0 8.9H6.9V15.5L0 14.5ZM7.8 8.9H16.6V16.9L7.8 15.6Z" fill="#fff"/></svg>
<div class="r" style="left:48px;top:1040px;width:344px;height:40px;background:#f2f2f2;"></div>
<div class="r" style="left:48px;top:1040px;width:344px;height:1px;background:#c9c9c9;"></div>
<svg style="left:58px;top:1049px" width="20" height="20" viewBox="0 0 20 20"><circle cx="12.3" cy="7.7" r="5.4" fill="none" stroke="#222" stroke-width="1.3"/><path d="M8.4 11.6L1.8 18.2" stroke="#222" stroke-width="1.5"/></svg>
<div class="t" style="top:1051px;font-size:15px;line-height:19px;color:#3c3c3c;letter-spacing:-0.28px;left:88px;">Type here to search</div>
<svg style="left:406px;top:1050px" width="20" height="20" viewBox="0 0 20 20"><circle cx="10" cy="10" r="7" fill="none" stroke="#fff" stroke-width="2.2"/></svg>
<svg style="left:455px;top:1051px" width="18" height="17" viewBox="0 0 18 17"><path d="M1.5 1V3.5M1.5 1.5H11.5M11.5 1V3.5M1.5 16V13.5M1.5 15.5H11.5M11.5 16V13.5" stroke="#fff" stroke-width="1" fill="none"/><rect x="1.5" y="5" width="10" height="7" fill="none" stroke="#fff" stroke-width="1.4"/><path d="M15.5 1V3.5M15.5 9V16" stroke="#fff" stroke-width="1.2"/><rect x="14.4" y="5" width="2.4" height="2.6" fill="#fff"/></svg>
<div class="r" style="left:736px;top:1040px;width:49px;height:40px;background:#4a4d51;"></div>
<div class="r" style="left:544px;top:1078px;width:40px;height:2px;background:#76b9ed;"></div>
<div class="r" style="left:593px;top:1078px;width:40px;height:2px;background:#76b9ed;"></div>
<div class="r" style="left:736px;top:1078px;width:49px;height:2px;background:#76b9ed;"></div>
<div class="r" style="left:789px;top:1078px;width:40px;height:2px;background:#76b9ed;"></div>
<div class="r" style="left:838px;top:1078px;width:40px;height:2px;background:#76b9ed;"></div>
<div class="r" style="left:887px;top:1078px;width:40px;height:2px;background:#76b9ed;"></div>
<div class="r" style="left:936px;top:1078px;width:40px;height:2px;background:#76b9ed;"></div>
<div class="r" style="left:985px;top:1078px;width:40px;height:2px;background:#76b9ed;"></div>
<svg style="left:503px;top:1048px" width="24" height="24" viewBox="0 0 24 24"><defs>
<linearGradient id="eg1" x1="0" y1="0" x2="1" y2="0.6"><stop offset="0" stop-color="#1ea3e6"/><stop offset=".55" stop-color="#2fc3c4"/><stop offset="1" stop-color="#6be04f"/></linearGradient>
<linearGradient id="eg2" x1="0" y1="0" x2="0" y2="1"><stop offset="0" stop-color="#1c8fe0"/><stop offset="1" stop-color="#0f62b8"/></linearGradient></defs>
<path d="M12 0.2C19 0.2 23.8 5.2 23.8 10.6C23.8 14.2 21.2 16.6 18.2 16.6C15.6 16.6 14.4 15.4 14.6 14.2C15.8 12.6 15.4 9.4 12.2 9.2C8 9 5 12.4 5.4 16.6C2.4 14 0.2 11.2 0.6 9C1.6 3.6 6.4 0.2 12 0.2Z" fill="url(#eg1)"/>
<path d="M0.5 10C-0.6 17.4 4.6 23.8 12 23.8C15.6 23.8 19.4 22.2 21.6 18.6C18.6 20.6 12.4 20.2 9.8 15.8C8.6 13.6 9.2 11.2 11 10C7.6 5.6 1.6 6.6 0.5 10Z" fill="url(#eg2)"/>
<path d="M6.6 13.4C5.8 19 9.6 23.2 14 23.6C17.6 23.2 20.4 21 21.8 18.2C18.6 20.4 12.6 20.2 9.8 15.8C8.8 14 9 12 10 10.8C8.6 10.6 7 11.6 6.6 13.4Z" fill="#0e4f9e"/>
<path d="M10.2 12.8C10.2 10.8 12 9.6 13.6 10.4C15.2 11.2 15.2 13.2 14.4 14.4C13.4 15.8 10.2 15.4 10.2 12.8Z" fill="#1f2327"/></svg>
<svg style="left:552.6px;top:1048.6px" width="22.4" height="22.4" viewBox="0 0 22.4 22.4">
<circle cx="11.2" cy="11.2" r="11.2" fill="#db4437"/>
<path d="M11.2 11.2L1.50 5.60A11.2 11.2 0 0 0 11.20 22.40L10.64 12.17Z" fill="#1aa260"/>
<path d="M11.2 11.2L20.90 5.60A11.2 11.2 0 0 1 9.26 22.23Z" fill="#ffcd40"/>
<path d="M1.50 5.60A11.2 11.2 0 0 1 21.58 7.00L16.39 9.10L11.20 5.60L6.52 8.50Z" fill="#db4437"/>
<path d="M1.50 5.60L6.49 13.40L10.30 16.32L12.76 22.29A11.2 11.2 0 0 1 1.50 5.60Z" fill="#1aa260"/>
<path d="M21.58 7.00L11.7 5.8999999999999995L15.46 14.18L12.76 22.29A11.2 11.2 0 0 0 21.58 7.00Z" fill="#ffcd40"/>
<circle cx="11.2" cy="11.2" r="5.3" fill="#f1f1f1"/><circle cx="11.2" cy="11.2" r="4.2" fill="#4285f4"/></svg>
<svg style="left:601.6px;top:1050.6px" width="22" height="19" viewBox="0 0 22 19">
<path d="M0.3 0.4H9.2L10.6 1.6H0.3Z" fill="#e8a400"/><path d="M0.3 0.4H9.2L10.4 2.6H0.3Z" fill="#f0ad0e"/>
<rect x="0.3" y="1.6" width="21.4" height="15.4" fill="#ffd667"/><rect x="0.3" y="1.6" width="21.4" height="1" fill="#ffe08a"/>
<path d="M4.4 10.4H17.6V18.2H14.4V13.4H7.6V18.2H4.4Z" fill="#3a96dd"/><rect x="4.4" y="10.4" width="13.2" height="1.2" fill="#4aa6ea"/></svg>
<svg style="left:649.6px;top:1048px" width="24" height="24" viewBox="0 0 24 24">
<path d="M6.4 8V2.2Q6.4 0.8 7.8 0.8H16.4Q17.8 0.8 17.8 2.2V8" fill="none" stroke="#f2f2f2" stroke-width="1.7"/>
<rect x="0.3" y="6.2" width="23.2" height="17.6" rx="0.6" fill="#f4f4f4"/><rect x="0.3" y="6.2" width="23.2" height="1.6" fill="#dcdcdc"/>
<rect x="7.3" y="11.2" width="4" height="3.8" fill="#f25022"/><rect x="12.3" y="11.2" width="4" height="3.8" fill="#7fba00"/><rect x="7.3" y="16.2" width="4" height="3.8" fill="#00a4ef"/><rect x="12.3" y="16.2" width="4" height="3.8" fill="#ffb900"/></svg>
<svg style="left:698.8px;top:1048.2px" width="24.4" height="23" viewBox="0 0 24.4 23"><defs><linearGradient id="mg1" x1="0" y1="0" x2="1" y2="1"><stop offset="0" stop-color="#1d9bea"/><stop offset="1" stop-color="#1385dd"/></linearGradient></defs>
<path d="M12.2 0.2L24.2 7.4V8.4H0.2V7.4Z" fill="#0f5fb5"/><path d="M12.2 0.2L24.2 7.4H0.2Z" fill="#1168bf"/>
<rect x="0.2" y="7.4" width="24" height="15.4" fill="url(#mg1)"/>
<path d="M24.2 7.4V22.8L12.2 14.4Z" fill="#35c1f1"/><path d="M24.2 22.8L12.2 14.4L18 10.2Z" fill="#2fb4ec"/>
<path d="M2.2 7.8H22.2L12.2 14.6Z" fill="#f3f3f3"/><path d="M2.2 7.8H22.2L21.2 8.6H3.2Z" fill="#d8d8d8"/></svg>
<svg style="left:748px;top:1048px" width="24" height="24" viewBox="0 0 24 24"><defs><clipPath id="fac"><rect width="24" height="24" rx="2"/></clipPath></defs><g clip-path="url(#fac)">
<rect width="24" height="24" fill="#fff"/><rect x="17.2" width="6.8" height="24" fill="#f3fbfb"/>
<path d="M0 21C7 19 13 15.4 17.2 9.6V24H0Z" fill="#0c9299"/><path d="M17.2 24V9.6" stroke="#fff" stroke-width=".6"/>
<path d="M19 2.6H22.6M20.8 2.6V6M19.4 8.4h2.8M19.4 9.6h2.8M19.4 10.8h2.8M22.4 13.6L19.2 15.2L22.4 16.8M19 19.6h3.4M19 19.6v3M19 21h2.4" stroke="#2b8f96" stroke-width=".9" fill="none"/>
<path d="M17.8 23.6L23.4 17.4V23.6Z" fill="#0c9299" opacity=".5"/>
<text x="1.4" y="11.4" font-family="Liberation Sans" font-weight="700" font-size="12.4" fill="#dc1f1f" stroke="#dc1f1f" stroke-width="0.45" letter-spacing="-0.9" textLength="12" lengthAdjust="spacingAndGlyphs">FA</text></g></svg>
<svg style="left:796.8px;top:1049px" width="24.6" height="21.2" viewBox="0 0 24.6 21.2">
<rect x="6.2" y="0" width="18.2" height="21.2" rx="0.8" fill="#185c37"/>
<rect x="6.2" y="0" width="9.2" height="5.6" fill="#21a366"/><rect x="15.4" y="0" width="9" height="5.6" fill="#33c481"/>
<rect x="6.2" y="5.6" width="9.2" height="5.2" fill="#107c41"/><rect x="15.4" y="5.6" width="9" height="5.2" fill="#21a366"/>
<rect x="6.2" y="10.8" width="9.2" height="5.2" fill="#185c37"/><rect x="15.4" y="10.8" width="9" height="5.2" fill="#107c41"/>
<rect x="6.2" y="16" width="18.2" height="5.2" fill="#185c37"/>
<rect x="1" y="5.8" width="12" height="12" fill="#000" opacity=".25"/>
<rect x="0" y="5" width="12.2" height="12" rx="0.6" fill="#107c41"/>
<path d="M3.4 7.6L8.8 14.6M8.8 7.6L3.4 14.6" stroke="#fff" stroke-width="1.7"/></svg>
<svg style="left:846px;top:1048px" width="24.2" height="24" viewBox="0 0 24.2 24">
<path d="M0 0H18.6L24.2 5.6V24H0Z" fill="#f7921e"/><path d="M18.6 0L24.2 5.6H18.6Z" fill="#1f2327"/><path d="M19.4 0.2L24 4.8H19.4Z" fill="#f7921e"/>
<path d="M12 6L21 13L12 20L3 13Z" fill="#f9a94a" opacity=".7"/>
<path d="M16.6 7.2C13.4 3.8 6.6 5.6 5.8 10.8C5.2 15.4 9.4 18.2 13 17.2C16.2 16.4 17.2 13.4 16.6 11.6H11.8C13.6 12.2 14.4 13.2 13.6 14.4C12.4 15.8 9.6 15.2 9.2 12.2C8.8 9 11.6 6.2 16.6 7.2Z" fill="#fff"/>
<path d="M13 4.6C15.4 4.4 17 5.4 18.2 6.8" stroke="#fff" stroke-width=".9" fill="none"/>
<text x="7" y="22.4" font-family="Liberation Sans" font-weight="700" font-size="5.4" fill="#fff" letter-spacing="0.3">PDF</text></svg>
<svg style="left:0;top:0" width="1" height="1"><g transform="translate(906.8 1059.9) rotate(22.5)"><circle r="5.7" fill="none" stroke="#fff" stroke-width="2.7"/><rect x="-1.8" y="-9.3" width="3.6" height="3.4" rx="0.4" transform="rotate(0)" fill="#fff"/><rect x="-1.8" y="-9.3" width="3.6" height="3.4" rx="0.4" transform="rotate(45)" fill="#fff"/><rect x="-1.8" y="-9.3" width="3.6" height="3.4" rx="0.4" transform="rotate(90)" fill="#fff"/><rect x="-1.8" y="-9.3" width="3.6" height="3.4" rx="0.4" transform="rotate(135)" fill="#fff"/><rect x="-1.8" y="-9.3" width="3.6" height="3.4" rx="0.4" transform="rotate(180)" fill="#fff"/><rect x="-1.8" y="-9.3" width="3.6" height="3.4" rx="0.4" transform="rotate(225)" fill="#fff"/><rect x="-1.8" y="-9.3" width="3.6" height="3.4" rx="0.4" transform="rotate(270)" fill="#fff"/><rect x="-1.8" y="-9.3" width="3.6" height="3.4" rx="0.4" transform="rotate(315)" fill="#fff"/></g></svg>
<svg style="left:945px;top:1049px" width="22.2" height="22" viewBox="0 0 22.2 22"><defs><linearGradient id="pg1" x1="0" y1="0" x2="1" y2="1"><stop offset="0" stop-color="#1fa8ea"/><stop offset=".6" stop-color="#4f8fe0"/><stop offset="1" stop-color="#8f86e6"/></linearGradient><clipPath id="pc"><rect width="22.2" height="22" rx="0.8"/></clipPath></defs>
<g clip-path="url(#pc)"><rect width="22.2" height="22" fill="url(#pg1)"/>
<path d="M11 12.8L14.6 10.6L22.2 17.4V22H14Z" fill="#4a68c8"/>
<path d="M0 13.6L6.2 7.8L22.2 21.4V22H0Z" fill="#17407f"/><path d="M0 13.6L6.2 7.8L10 11V22H0Z" fill="#1a4a8e"/>
<circle cx="15" cy="5" r="2" fill="#efefef"/></g></svg>
<svg style="left:993px;top:1047.8px" width="24.4" height="24.4" viewBox="0 0 24.4 24.4">
<path d="M12.4 0.4C20 0.4 24 3.6 24 12.2C24 20.8 20 24 12 24C8 24 4.4 23.6 2.8 21C0.6 18.4 0.4 15.4 0.4 12.2C0.4 3.6 4.4 0.4 12.4 0.4Z" fill="#0f6bf2"/>
<path d="M13 0.4C20.4 0.4 24 3.6 24 11.6C24 18 21.6 21.4 16 21.6C12 21.8 7 22 4.6 20.4C4 20 3 20.2 2.6 19.6C1.6 15 1.4 6 5 2.4C7 0.8 10 0.4 13 0.4Z" fill="#fff"/>
<text x="3.6" y="14.2" font-family="Liberation Sans" font-weight="700" font-size="9" fill="#1a6cf3" letter-spacing="-0.35">Zalo</text></svg>
<svg style="left:1700px;top:1055px" width="14" height="9" viewBox="0 0 14 9"><path d="M1 8L7 2L13 8" fill="none" stroke="#fff" stroke-width="1.3"/></svg>
<svg style="left:1723px;top:1053px" width="17" height="15" viewBox="0 0 17 15"><rect x="3.5" y="1.5" width="12" height="8.5" fill="none" stroke="#fff" stroke-width="1"/><path d="M9.5 10V13.5M6 13.5H13" stroke="#fff" stroke-width="1"/><rect x="0.5" y="1.5" width="4" height="4" fill="#1f2327" stroke="#fff" stroke-width="1"/><path d="M2.5 5.5V13.5H6" stroke="#fff" stroke-width="1" fill="none"/></svg>
<svg style="left:1746px;top:1053px" width="20" height="16" viewBox="0 0 20 16"><path d="M1.5 5.5H3.5L6.5 2V14L3.5 10.5H1.5Z" fill="none" stroke="#fff" stroke-width="1"/><circle cx="12.5" cy="10.7" r="4.5" fill="#e81123"/><path d="M10.7 8.9L14.3 12.5M14.3 8.9L10.7 12.5" stroke="#fff" stroke-width="1.2"/></svg>
<div class="t" style="top:1052px;font-size:12px;line-height:16px;color:#fff;letter-spacing:-0.9px;left:1773px;">ENG</div>
<div class="t" style="top:1043px;font-size:12px;line-height:16px;color:#fff;letter-spacing:-0.45px;left:1535.5px;width:600px;text-align:center;">5:53 PM</div>
<div class="t" style="top:1061px;font-size:12px;line-height:16px;color:#fff;letter-spacing:-0.2px;left:1534.5px;width:600px;text-align:center;">3/5/2021</div>
<svg style="left:1878px;top:1051px" width="28" height="26" viewBox="0 0 28 26"><path d="M1 1.5H17V13H7.5L4.5 16V13H1Z" fill="#fff"/><path d="M4 4.5H14M4 7H14M4 9.5H14" stroke="#1f2327" stroke-width="1"/><circle cx="16.5" cy="16.5" r="7.6" fill="#2b2f33" stroke="#8a8d90" stroke-width="1"/><text x="14" y="20.5" font-family="Liberation Sans" font-size="11" fill="#fff">1</text></svg>
<div class="r" style="left:1915px;top:1040px;width:1px;height:40px;background:#5a5d60;"></div>
</body></html>
